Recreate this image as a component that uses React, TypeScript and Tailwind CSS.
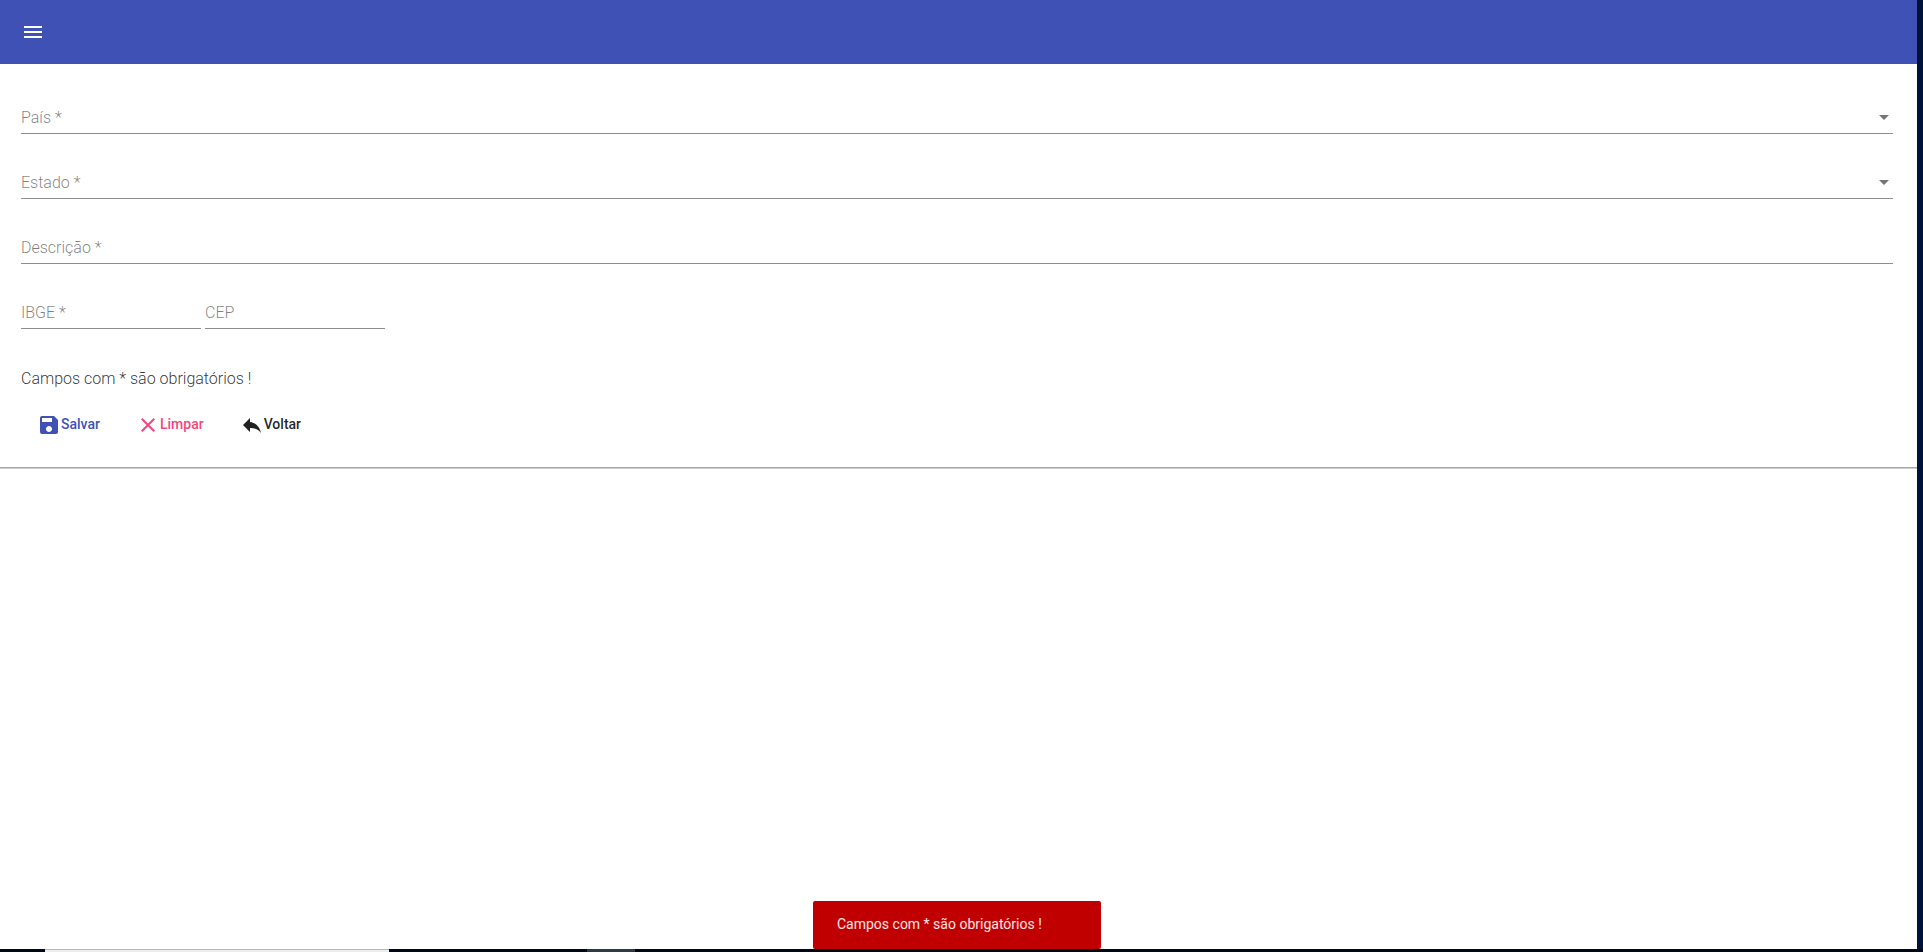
import React, { useState } from "react";
import { MdClear, MdMenu, MdReply, MdSave } from "react-icons/md";

interface FieldProps {
  id: string;
  label: string;
  required?: boolean;
  className?: string;
}

const labelClass =
  "pointer-events-none absolute left-0 top-[18px] text-base font-light leading-6 text-black/50";

const SelectField = ({ id, label, required }: FieldProps) => {
  return (
    <div className="relative mb-[19px] pt-[18px]">
      <select
        id={id}
        required={required}
        defaultValue=""
        className="block h-7 w-full appearance-none border-b border-[#8e8e8e] bg-transparent text-base font-light outline-none"
      >
        <option value=""></option>
      </select>
      <label htmlFor={id} className={labelClass}>
        {label} {required && "*"}
      </label>
      <svg
        className="pointer-events-none absolute right-1 top-[27px] h-[5px] w-[10px] fill-[#757575]"
        viewBox="0 0 10 5"
      >
        <path d="M0 0h10L5 5z" />
      </svg>
    </div>
  );
};

const TextField = ({ id, label, required, className = "w-full" }: FieldProps) => {
  return (
    <div className={`relative mb-[19px] pt-[18px] ${className}`}>
      <input
        id={id}
        type="text"
        required={required}
        className="block h-7 w-full border-b border-[#8e8e8e] bg-transparent text-base font-light outline-none"
      />
      <label htmlFor={id} className={labelClass}>
        {label} {required && "*"}
      </label>
    </div>
  );
};

const buttonClass = "flex h-9 items-center px-4 text-sm font-medium";

const App = () => {
  const [message, setMessage] = useState("Campos com * são obrigatórios !");

  return (
    <div className="flex min-h-screen flex-col bg-[#000814] font-[Roboto,sans-serif]">
      <div className="flex flex-1 bg-[#001238] pr-1.5">
        <div className="flex-1 bg-white">
          <header className="flex h-16 items-center bg-[#3f51b5] px-[21px] text-white">
            <button type="button" aria-label="Menu">
              <MdMenu className="size-6" />
            </button>
          </header>

          <form
            className="px-[21px] pt-6 pb-6 shadow-[0_1px_0_#a8a8a8,0_2px_0_#cccccc]"
            onSubmit={(e) => e.preventDefault()}
          >
            <div className="mr-[3px]">
              <SelectField id="pais" label="País" required />
              <SelectField id="estado" label="Estado" required />
              <TextField id="descricao" label="Descrição" required />
              <div className="flex gap-1">
                <TextField id="ibge" label="IBGE" required className="w-[180px]" />
                <TextField id="cep" label="CEP" className="w-[180px]" />
              </div>
            </div>
            <p className="mt-[19px] text-base font-light leading-6 text-black/80">
              Campos com * são obrigatórios !
            </p>
            <div className="mt-4 flex gap-1">
              <button type="submit" className={`${buttonClass} text-[#3f51b5]`}>
                <MdSave className="size-6" />
                <span className="pb-0.5">Salvar</span>
              </button>
              <button type="reset" className={`${buttonClass} text-[#f44580]`}>
                <MdClear className="size-6" />
                <span className="pb-0.5">Limpar</span>
              </button>
              <button type="button" className={`${buttonClass} text-black/87`}>
                <MdReply className="size-6" />
                <span className="pb-0.5">Voltar</span>
              </button>
            </div>
          </form>
        </div>
      </div>

      {/* taskbar */}
      <div className="flex h-[3px]">
        <div className="ml-[45px] w-[344px] border-t border-[#b4b8b8] bg-[#eceeee]"></div>
        <div className="ml-[198px] w-12 bg-[#2c3a42]"></div>
      </div>

      {message && (
        <div className="fixed inset-x-0 bottom-[3px] flex justify-center pr-[9px]">
          <div
            role="alert"
            onClick={() => setMessage("")}
            className="flex h-12 w-72 items-center rounded-xs bg-[#c00000] px-6 pb-0.5 text-sm text-white/90"
          >
            {message}
          </div>
        </div>
      )}
    </div>
  );
};

export default App;
